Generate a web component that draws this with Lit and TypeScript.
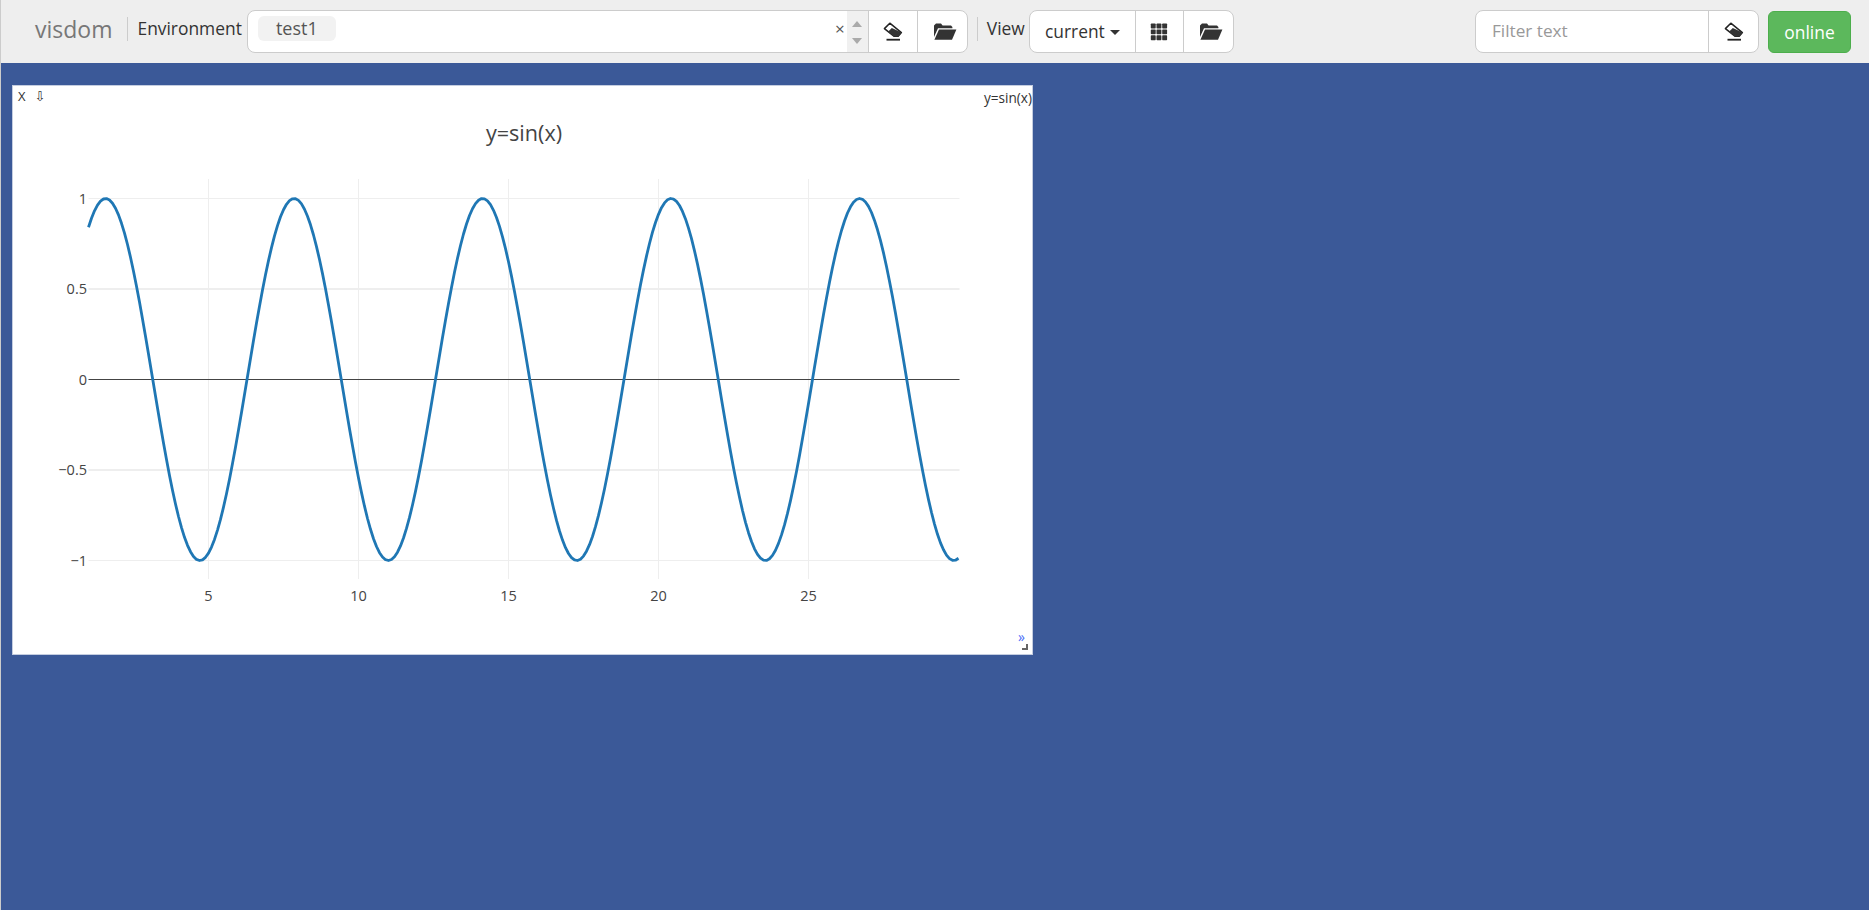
import { LitElement, html, css, svg } from 'lit';
import { customElement } from 'lit/decorators.js';

const eraser = html`<svg class="icon eraser" width="20" height="20" viewBox="0 0 20 20">
    <path d="M6.8 1.2 L18.4 10.6 L15.2 14.3 L11.2 14.3 L1.4 6.6 Z" fill="#fff" stroke="#222" stroke-width="1.5" stroke-linejoin="round"/>
    <path d="M8.8 6 L18.6 10.6 L15.4 14.4 L11 14.4 L5 9.8 Z" fill="#333"/>
    <rect x="3.5" y="16.8" width="13.5" height="1.8" fill="#222"/>
</svg>`;

const folder = html`<svg class="icon folder" width="24" height="20" viewBox="0 0 24 20">
    <path d="M1 5 L1 3.4 L3 1.4 L8 1.4 L9.6 3.4 L18 3.4 L19.4 5 L19.4 6.2 L5 6.2 L1 15 Z" fill="#333"/>
    <path d="M6 7.6 L23.4 7.6 L19 17.8 L1.4 17.8 Z" fill="#333"/>
</svg>`;

const grid = html`<svg class="icon" width="18" height="18" viewBox="0 0 18 18" fill="#333">
    ${[0.5, 6.4, 12.3].map(y => [0.8, 6.5, 12.2].map(x => svg`<rect x=${x} y=${y} width="4.9" height="4.9" rx="0.7"/>`))}
</svg>`;

@customElement('chart-panel')
export class ChartPanel extends LitElement {
    static styles = css`
        :host {
            display: block;
            position: relative;
            width: 1021px;
            height: 570px;
            background: #fff;
            box-shadow: inset 0 0 0 1px #c4cde0;
            font-family: "Open Sans", sans-serif;
        }

        .bar {
            display: flex;
            align-items: center;
            height: 18px;
            padding: 2px 1px 0 6px;
            color: #333;
        }

        .close {
            font-size: 13px;
            margin-right: 9px;
        }

        .pin {
            font-family: "DejaVu Sans", sans-serif;
            font-size: 13px;
            margin-top: 1px;
        }

        .title {
            margin-left: auto;
            margin-top: 2px;
            font-size: 13.6px;
        }

        svg {
            position: absolute;
            left: 0;
            top: 0;
        }

        text {
            font-family: "Open Sans", sans-serif;
            fill: #444;
        }

        .tick {
            font-size: 14.5px;
        }

        .more {
            position: absolute;
            right: 8px;
            bottom: 12px;
            font-size: 14px;
            line-height: 13px;
            color: #4a6cf7;
        }

        .handle {
            position: absolute;
            right: 5px;
            bottom: 5px;
            width: 4px;
            height: 4px;
            border-right: 2px solid #666;
            border-bottom: 2px solid #666;
        }
    `;

    // chart coordinates are in panel pixels, panel sits at 12,85 on the page
    private _x(v: number) { return 30 * v + 58.5 - 12; }
    private _y(v: number) { return 379.5 - 181 * v - 85; }

    protected render() {
        const pts: string[] = [];
        for (let v = 1; v <= 30.001; v += 0.1) {
            pts.push(`${this._x(v).toFixed(1)},${this._y(Math.sin(v)).toFixed(1)}`);
        }
        const left = this._x(1);
        const right = this._x(30) + 1;
        return html`
            <div class="bar">
                <span class="close">X</span>
                <span class="pin">⇩</span>
                <span class="title">y=sin(x)</span>
            </div>
            <svg width="1021" height="570">
                <text x="512" y="56" text-anchor="middle" font-size="21.6">y=sin(x)</text>
                ${[5, 10, 15, 20, 25].map(v => svg`
                    <line x1=${this._x(v)} x2=${this._x(v)} y1="94" y2="494" stroke="#eee" stroke-width="1"/>
                    <text class="tick" x=${this._x(v)} y="516" text-anchor="middle">${v}</text>
                `)}
                ${[1, 0.5, -0.5, -1].map(v => svg`
                    <line x1=${left} x2=${right} y1=${this._y(v)} y2=${this._y(v)} stroke="#eee" stroke-width=${v === 0.5 || v === -0.5 ? 2 : 1}/>
                `)}
                <line x1=${left} x2=${right} y1=${this._y(0)} y2=${this._y(0)} stroke="#444" stroke-width="1"/>
                ${[['1', 1], ['0.5', 0.5], ['0', 0], ['−0.5', -0.5], ['−1', -1]].map(([label, v]) => svg`
                    <text class="tick" x="75" y=${this._y(v as number) + 5} text-anchor="end">${label}</text>
                `)}
                <polyline points=${pts.join(' ')} fill="none" stroke="#1f77b4" stroke-width="2.8" stroke-linejoin="round"/>
            </svg>
            <span class="more">»</span>
            <span class="handle"></span>
        `;
    }
}

@customElement('app-root')
export class AppRoot extends LitElement {
    static styles = css`
        :host {
            display: block;
            min-height: 910px;
            background: #3b5998;
            border-left: 1px solid #ccc;
            box-sizing: border-box;
            font-family: "Open Sans", sans-serif;
            color: #333;
        }

        nav {
            display: flex;
            align-items: flex-start;
            box-sizing: border-box;
            height: 63px;
            padding: 10px 18px 0 34px;
            background: #eee;
        }

        .brand {
            font-size: 23px;
            line-height: 38px;
            color: #777;
            margin-right: 15px;
        }

        .sep {
            width: 1px;
            height: 24px;
            margin-top: 7px;
            background: #ccc;
        }

        .label {
            font-size: 17.4px;
            line-height: 37px;
        }

        .env-label {
            margin: 0 5px 0 9px;
        }

        .view-label {
            margin: 0 4px 0 9px;
        }

        .group {
            display: flex;
            box-sizing: border-box;
            height: 43px;
            border: 1px solid #ccc;
            border-radius: 8px;
            background: #fff;
            overflow: hidden;
        }

        .group > * + * {
            border-left: 1px solid #ccc;
        }

        .btn {
            display: flex;
            align-items: center;
            justify-content: center;
            box-sizing: border-box;
            font-size: 17.4px;
            color: #333;
        }

        .eraser {
            margin-left: 1px;
        }

        .folder {
            margin-left: 5px;
        }

        .w49 { width: 49px; }
        .w48 { width: 48px; }
        .w50 { width: 50px; }

        .env {
            width: 721px;
            margin-right: 9px;
        }

        .env .field {
            flex: 1;
            display: flex;
            align-items: flex-start;
            padding: 5px 0 0 10px;
        }

        .pill {
            width: 78px;
            height: 25px;
            line-height: 24px;
            text-align: center;
            font-size: 18px;
            color: #555;
            background: #f2f2f2;
            border-radius: 6px;
        }

        .clear {
            margin-left: auto;
            margin-right: 2px;
            font-size: 17px;
            line-height: 26px;
            color: #555;
        }

        .spin {
            display: flex;
            flex-direction: column;
            justify-content: space-between;
            align-items: center;
            box-sizing: border-box;
            width: 21px;
            padding: 10px 0 8px;
            background: #f0f0f0;
            margin-top: -5px;
            align-self: stretch;
        }

        .up, .down {
            width: 0;
            height: 0;
            border-left: 5px solid transparent;
            border-right: 5px solid transparent;
        }

        .up { border-bottom: 6px solid #aaa; }
        .down { border-top: 6px solid #aaa; }

        .view-group {
            width: 205px;
        }

        .current {
            flex: 1;
            gap: 5px;
            padding-bottom: 2px;
        }

        .caret {
            width: 0;
            height: 0;
            margin-top: 4px;
            border-left: 5px solid transparent;
            border-right: 5px solid transparent;
            border-top: 5px solid #333;
        }

        .filter {
            width: 284px;
            margin-left: auto;
        }

        .filter .text {
            flex: 1;
            padding-left: 16px;
            font-size: 17.2px;
            line-height: 39px;
            color: #999;
        }

        .online {
            box-sizing: border-box;
            width: 83px;
            height: 42px;
            margin: 1px 0 0 9px;
            line-height: 40px;
            text-align: center;
            font-size: 17.4px;
            color: #fff;
            background: #5cb85c;
            border: 1px solid #4cae4c;
            border-radius: 6px;
        }

        main {
            padding: 22px 0 0 11px;
        }
    `;

    protected render() {
        return html`
            <nav>
                <span class="brand">visdom</span>
                <span class="sep"></span>
                <span class="label env-label">Environment</span>
                <div class="group env">
                    <div class="field">
                        <span class="pill">test1</span>
                        <span class="clear">×</span>
                        <span class="spin"><i class="up"></i><i class="down"></i></span>
                    </div>
                    <div class="btn w49">${eraser}</div>
                    <div class="btn w50">${folder}</div>
                </div>
                <span class="sep"></span>
                <span class="label view-label">View</span>
                <div class="group view-group">
                    <div class="btn current">current <i class="caret"></i></div>
                    <div class="btn w48">${grid}</div>
                    <div class="btn w50">${folder}</div>
                </div>
                <div class="group filter">
                    <div class="text">Filter text</div>
                    <div class="btn w50">${eraser}</div>
                </div>
                <div class="online">online</div>
            </nav>
            <main>
                <chart-panel></chart-panel>
            </main>
        `;
    }
}
